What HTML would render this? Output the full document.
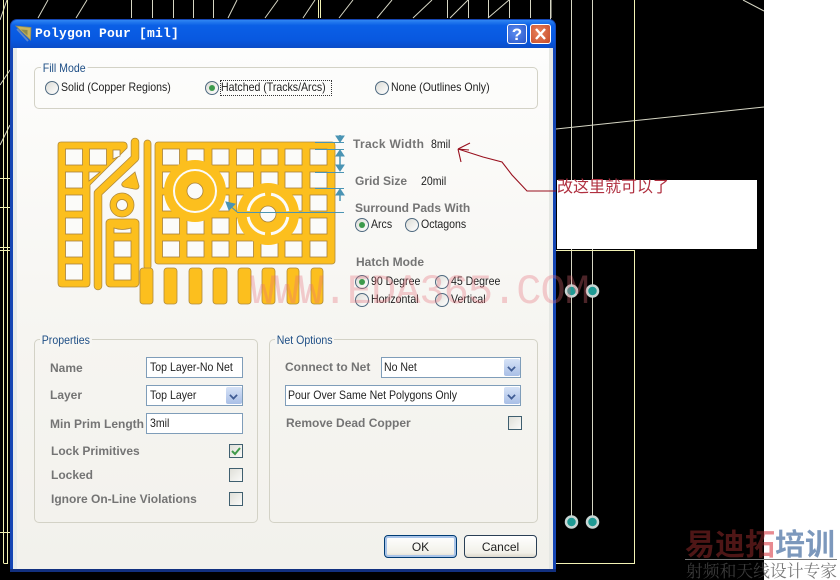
<!DOCTYPE html>
<html><head><meta charset="utf-8"><style>
html,body{margin:0;padding:0;background:#fff}
#p{position:relative;width:840px;height:580px;overflow:hidden;background:#fff;font-family:"Liberation Sans","Noto Sans CJK SC",sans-serif;filter:blur(.25px)}
#p div,#p span.a{position:absolute}
.t{font-size:12px;line-height:14px;height:14px;color:#222;white-space:nowrap;transform:scaleX(.88);transform-origin:0 0}
.l{font-size:12px;font-weight:bold;line-height:14px;height:14px;color:#747474;white-space:nowrap}
.lg{font-size:12px;line-height:14px;height:14px;color:#1f4f86;white-space:nowrap;background:#f7f6f2;padding:0 2px;transform:scaleX(.88);transform-origin:0 0}
.g{border:1px solid #d3d2c6;border-radius:5px;box-sizing:border-box}
.r{width:12px;height:12px;border-radius:50%;border:1px solid #4f6a80;background:linear-gradient(135deg,#dcdcd6,#fff);box-sizing:content-box}
.r.on::after{content:"";position:absolute;left:3px;top:3px;width:6px;height:6px;border-radius:50%;background:#3c9a4c}
.i{background:#fff;border:1px solid #7f9db9;box-sizing:border-box}
.b{background:linear-gradient(#d6e2f6,#a9bfe6);width:16px;height:17px;border-radius:2px}
.b::after{content:"";position:absolute;left:4px;top:5px;width:5px;height:5px;border-right:2px solid #3f5c94;border-bottom:2px solid #3f5c94;transform:rotate(45deg) scale(.85)}
.c{width:12px;height:12px;border:1px solid #3f5f6f;background:linear-gradient(135deg,#dfdfd8,#fafaf8)}
.btn{height:23px;width:73px;box-sizing:border-box;border:1px solid #2a3f55;border-radius:4px;background:linear-gradient(#fff,#f1f0e8 80%,#dcd8cc);text-align:center;font-size:12px;line-height:22px;color:#222}
</style></head><body><div id="p">
<div style="left:0;top:0;width:764px;height:580px;background:#000"></div>
<svg class="bg" width="840" height="580" style="position:absolute;left:0;top:0" fill="none" stroke-width="1">
<g stroke="#d6d6c4">
<path d="M38 18L48 0M76 18L87 0M228 18L237 0M265 18L278 0M303 18L315 0M339 18L353 0M377 18L392 0M413 18L432 0M450 18L468 0M488 18L509 0"/>
<path d="M131.500 0V18M152.500 0V18M173.500 0V18M193.500 0V18M213.500 0V18M447.500 0V18M468.500 0V18M488.500 0V18M509.500 0V18M530.500 0V18M551 0V18"/>
<path d="M550.500 0V20M571.500 0V180M592.500 0V180M571.500 249V522M592.500 249V522"/>
<path d="M556 129L764 107M743 0L764 11"/>
<path d="M0 85L10 70M0 145L10 125M0 20L7 0"/>
</g>
<g stroke="#f2f2b4">
<path d="M318.500 0V18M320.500 0V18M634.500 0V180M556 250.500H634.500V563.500H556M3.500 0V563M7.500 0V563.500H3.500M0 178.500H10M0 207.500H10M0 247.500H10M0 250.500H10M0 532.500H10"/>
</g>
<g fill="#1f9a94" stroke="#c8d6d4" stroke-width="2.500">
<circle cx="571.500" cy="291" r="5.500"/><circle cx="592.500" cy="291" r="5.500"/>
<circle cx="571.500" cy="522" r="5.500"/><circle cx="592.500" cy="522" r="5.500"/>
</g>
</svg>
<div style="left:557px;top:180px;width:200px;height:69px;background:#fff"></div>
<div style="left:557px;top:179px;font-size:16px;line-height:18px;color:#b03040;white-space:nowrap">改这里就可以了</div>

<!-- window -->
<div style="left:10px;top:19px;width:546px;height:553px;border-radius:7px 7px 0 0;background:#1546b4"></div>
<div style="left:11px;top:20px;width:544px;height:28px;border-radius:6px 6px 0 0;background:linear-gradient(#2f86f2,#0a5fe6 20%,#0858e0 70%,#0a4cc8)"></div>
<div style="left:13px;top:48px;width:540px;height:521px;background:linear-gradient(#fdfdfc,#f6f5f1 55%,#f2f1ec)"></div>
<div style="left:13px;top:48px;width:4px;height:521px;background:#e6ebea"></div>
<div style="left:549px;top:48px;width:4px;height:521px;background:#e6e8e4"></div>
<div style="left:10px;top:569px;width:546px;height:3px;background:#12307f"></div>
<svg width="18" height="18" style="position:absolute;left:15px;top:25px"><path d="M1 1L16 2.500L15.500 15Z" fill="#c9b45a" stroke="#8a8a60" stroke-width=".8"/><path d="M6 4.500L12.500 5L12.500 10.500Z" fill="#8f8a4a"/><path d="M2 4L13 16" stroke="#5f86c8" stroke-width="1.800" fill="none"/></svg>
<div style="left:35px;top:26px;font:bold 13px/16px 'Liberation Mono',monospace;color:#fff;letter-spacing:.2px;white-space:nowrap">Polygon Pour [mil]</div>
<div style="left:507px;top:24px;width:20px;height:20px;box-sizing:border-box;border:1px solid #fff;border-radius:3px;background:radial-gradient(circle at 40% 40%,#5a8cf0,#2a56c8);color:#fff;font:bold 17px/19px 'Liberation Sans',sans-serif;text-align:center">?</div>
<div style="left:530px;top:24px;width:21px;height:20px;box-sizing:border-box;border:1px solid #fff;border-radius:3px;background:radial-gradient(circle at 40% 40%,#e8825c,#c64a28)"></div>
<svg width="21" height="20" style="position:absolute;left:530px;top:24px"><path d="M6 5L15 15M15 5L6 15" stroke="#fff" stroke-width="2.400"/></svg>

<!-- fill mode -->
<div class="g" style="left:34px;top:67px;width:504px;height:42px"></div>
<div class="lg" style="left:41px;top:61px;background:#fcfcfb">Fill Mode</div>
<div class="r" style="left:45px;top:81px"></div><div class="t" style="left:61px;top:80px">Solid (Copper Regions)</div>
<div class="r on" style="left:205px;top:81px"></div><div class="t" style="left:221px;top:80px">Hatched (Tracks/Arcs)</div>
<div style="left:220px;top:80px;width:110px;height:14px;border:1px dotted #333"></div>
<div class="r" style="left:375px;top:81px"></div><div class="t" style="left:391px;top:80px">None (Outlines Only)</div>

<!-- pour image -->
<svg width="310" height="180" viewBox="50 135 310 180" style="position:absolute;left:50px;top:135px">
<style>.h rect{width:17px;height:16px;fill:#fbfbf9;stroke:#a8823c;stroke-width:.8}.f rect,.o{fill:#fcbf1e;stroke:#b08a3c;stroke-width:.8}</style>
<path class="o" d="M61 142H123Q128 142 127 148L90 185V283Q90 287 86 287H62Q58 287 58 283V145Q58 142 61 142Z"/>
<path d="M135 142V158L98 193V286" fill="none" stroke="#b08a3c" stroke-width="8.500" stroke-linecap="round" stroke-linejoin="round"/>
<path d="M135 142V158L98 193V286" fill="none" stroke="#fcbf1e" stroke-width="7" stroke-linecap="round" stroke-linejoin="round"/>
<rect class="o" x="144" y="140" width="7" height="130" rx="3.500"/>
<rect class="o" x="155" y="142" width="180" height="122" rx="3"/>
<rect class="o" x="106" y="219" width="33" height="68" rx="4"/>
<path class="o" d="M135 172L139 186Q139 190 134 189L124 187Q120 185 123 182Z"/>
<circle class="o" cx="122" cy="205" r="12"/><circle cx="122" cy="205" r="5.500" fill="#fbfbf9" stroke="#a8823c" stroke-width=".8"/>
<g class="f">
<rect x="140" y="268" width="13" height="36" rx="3"/><rect x="164" y="268" width="13" height="36" rx="3"/><rect x="189" y="268" width="13" height="36" rx="3"/><rect x="213" y="268" width="14" height="36" rx="3"/><rect x="238" y="268" width="13" height="36" rx="3"/><rect x="262" y="268" width="13" height="36" rx="3"/><rect x="287" y="268" width="12" height="36" rx="3"/><rect x="311" y="268" width="12" height="36" rx="3"/>
</g>
<g class="h">
<rect x="65.500" y="149"/><rect x="65.500" y="172"/><rect x="65.500" y="195"/><rect x="65.500" y="218"/><rect x="65.500" y="241"/><rect x="65.500" y="264"/>
<rect x="89.500" y="149"/>
<rect x="114" y="241"/><rect x="114" y="264"/>
<rect x="162.500" y="149"/><rect x="187" y="149"/><rect x="212" y="149"/><rect x="236.500" y="149"/><rect x="261" y="149"/><rect x="285" y="149"/><rect x="310" y="149"/>
<rect x="162.500" y="172"/><rect x="212" y="172"/><rect x="236.500" y="172"/><rect x="261" y="172"/><rect x="285" y="172"/><rect x="310" y="172"/>
<rect x="162.500" y="195"/><rect x="212" y="195"/><rect x="236.500" y="195"/><rect x="285" y="195"/><rect x="310" y="195"/>
<rect x="162.500" y="218"/><rect x="187" y="218"/><rect x="212" y="218"/><rect x="236.500" y="218"/><rect x="285" y="218"/><rect x="310" y="218"/>
<rect x="162.500" y="241"/><rect x="187" y="241"/><rect x="212" y="241"/><rect x="236.500" y="241"/><rect x="261" y="241"/><rect x="285" y="241"/><rect x="310" y="241"/>
</g>
<path d="M114 228Q122 231 131 228V233H114Z" fill="#fbfbf9" stroke="#a8823c" stroke-width=".8"/>
<path d="M113 150H120V156L113 159Z" fill="#fbfbf9" stroke="#a8823c" stroke-width=".8"/>
<path d="M89 172H100L89 181Z" fill="#fbfbf9" stroke="#a8823c" stroke-width=".8"/>
<circle cx="195" cy="191" r="31" fill="#fcbf1e"/>
<circle cx="195" cy="191" r="21" fill="none" stroke="#fbfbf9" stroke-width="2"/>
<circle cx="195" cy="191" r="8" fill="#fbfbf9" stroke="#a8823c" stroke-width=".8"/>
<circle cx="268" cy="214" r="31" fill="#fcbf1e"/>
<circle cx="268" cy="214" r="20" fill="none" stroke="#fbfbf9" stroke-width="3" stroke-dasharray="25.400 6" stroke-dashoffset="-3"/>
<circle cx="268" cy="214" r="8" fill="#fbfbf9" stroke="#a8823c" stroke-width=".8"/>
<g stroke="#4a94b4" fill="#4a94b4" stroke-width="1">
<path d="M315 142.500H344M315 149.500H344M315 172.500H344M315 188.500H344M237 212.500H344M237 212L228 204" fill="none"/>
<path d="M340 141V131" fill="none" stroke-width="1.500"/><path d="M336 136L340 142L344 136Z"/>
<path d="M336 156L340 150L344 156Z"/><path d="M336 165L340 171L344 165Z"/><path d="M340 152V169" fill="none" stroke-width="1.500"/>
<path d="M336 195L340 189L344 195Z"/><path d="M340 190V201" fill="none" stroke-width="1.500"/>
<path d="M226 202L235 204L229 210Z"/>
</g>
</svg>

<!-- right labels -->
<div class="l" style="left:353px;top:137px;letter-spacing:.3px">Track Width</div>
<div class="t" style="left:431px;top:137px">8mil</div>
<div class="l" style="left:355px;top:174px">Grid Size</div>
<div class="t" style="left:421px;top:174px">20mil</div>
<div class="l" style="left:355px;top:201px">Surround Pads With</div>
<div class="r on" style="left:355px;top:218px"></div><div class="t" style="left:371px;top:217px">Arcs</div>
<div class="r" style="left:405px;top:218px"></div><div class="t" style="left:421px;top:217px">Octagons</div>
<div class="l" style="left:356px;top:255px">Hatch Mode</div>
<div class="r on" style="left:355px;top:275px"></div><div class="t" style="left:371px;top:274px">90 Degree</div>
<div class="r" style="left:435px;top:275px"></div><div class="t" style="left:451px;top:274px">45 Degree</div>
<div class="r" style="left:355px;top:293px"></div><div class="t" style="left:371px;top:292px">Horizontal</div>
<div class="r" style="left:435px;top:293px"></div><div class="t" style="left:451px;top:292px">Vertical</div>

<!-- properties -->
<div class="g" style="left:34px;top:339px;width:224px;height:184px"></div>
<div class="lg" style="left:40px;top:333px">Properties</div>
<div class="l" style="left:50px;top:361px">Name</div>
<div class="i" style="left:146px;top:357px;width:97px;height:21px"></div><div class="t" style="left:150px;top:360px">Top Layer-No Net</div>
<div class="l" style="left:50px;top:388px">Layer</div>
<div class="i" style="left:146px;top:385px;width:97px;height:21px"></div><div class="t" style="left:150px;top:388px">Top Layer</div><div class="b" style="left:226px;top:387px"></div>
<div class="l" style="left:50px;top:417px">Min Prim Length</div>
<div class="i" style="left:146px;top:413px;width:97px;height:21px"></div><div class="t" style="left:150px;top:416px">3mil</div>
<div class="l" style="left:51px;top:444px">Lock Primitives</div><div class="c" style="left:229px;top:444px"></div>
<svg width="14" height="14" style="position:absolute;left:229px;top:444px"><path d="M3 7L6 10L11 4" fill="none" stroke="#3f9a4a" stroke-width="2"/></svg>
<div class="l" style="left:51px;top:468px">Locked</div><div class="c" style="left:229px;top:468px"></div>
<div class="l" style="left:51px;top:492px">Ignore On-Line Violations</div><div class="c" style="left:229px;top:492px"></div>

<!-- net options -->
<div class="g" style="left:269px;top:339px;width:269px;height:184px"></div>
<div class="lg" style="left:275px;top:333px">Net Options</div>
<div class="l" style="left:285px;top:360px">Connect to Net</div>
<div class="i" style="left:381px;top:357px;width:140px;height:21px"></div><div class="t" style="left:384px;top:360px">No Net</div><div class="b" style="left:504px;top:359px"></div>
<div class="i" style="left:285px;top:385px;width:236px;height:21px"></div><div class="t" style="left:288px;top:388px">Pour Over Same Net Polygons Only</div><div class="b" style="left:504px;top:387px"></div>
<div class="l" style="left:286px;top:416px">Remove Dead Copper</div><div class="c" style="left:508px;top:416px"></div>

<div class="btn" style="left:384px;top:535px;border-color:#003c74;box-shadow:inset 0 0 0 2px #a9c4e8">OK</div>
<div class="btn" style="left:464px;top:535px">Cancel</div>

<!-- annotation -->
<svg width="120" height="60" viewBox="450 135 120 60" style="position:absolute;left:450px;top:135px" fill="none" stroke="#98101e" stroke-width="1.100">
<path d="M556 191H527L512 175L502 162L483 157L458 149M458 149L470 143M458 149L469 150M458 149L461 162"/>
</svg>

<!-- watermark -->
<div style="left:250px;top:267px;font:42px/50px 'Liberation Mono',monospace;letter-spacing:-1px;color:rgba(232,110,122,.33);white-space:nowrap">WWW.EDA365.COM</div>

<!-- logo -->
<div style="left:685px;top:526px;width:152px;font:bold 30px/32px 'Noto Sans CJK SC',sans-serif;white-space:nowrap;background:linear-gradient(90deg,#4e1616 0,#4e1616 79px,#e88a90 79px,#e88a90 91px,#7c98bc 91px);-webkit-background-clip:text;background-clip:text;color:transparent">易迪拓培训</div>
<div style="left:685px;top:559px;width:152px;height:1px;background:#777"></div>
<div style="left:686px;top:561px;width:152px;font:16.800px/19px 'Noto Serif CJK SC',serif;white-space:nowrap;background:linear-gradient(90deg,#3a3a3a 0,#3a3a3a 78px,#777 78px);-webkit-background-clip:text;background-clip:text;color:transparent">射频和天线设计专家</div>
</div></body></html>
